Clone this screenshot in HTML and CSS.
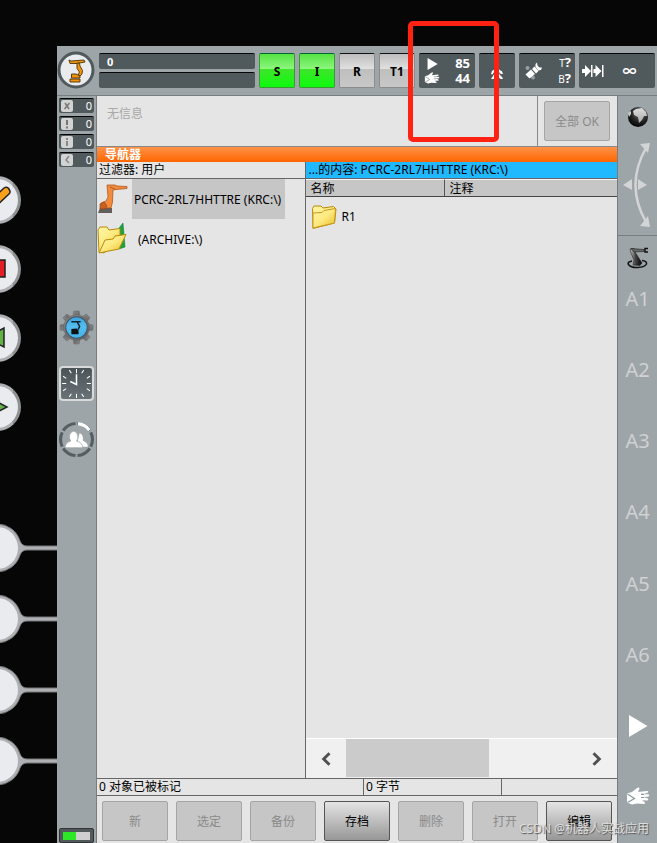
FILE: index.html
```html
<!DOCTYPE html>
<html lang="zh-CN">
<head>
<meta charset="utf-8">
<title>导航器</title>
<link rel="stylesheet" href="styles.css">
</head>
<body>
<svg class="defs" aria-hidden="true">
  <defs>
    <linearGradient id="metal" x1="0" y1="0" x2="1" y2="1"><stop offset="0" stop-color="#8b8b8b"/><stop offset="1" stop-color="#5c5c5c"/></linearGradient>
    <linearGradient id="blue" x1="0" y1="0" x2="0" y2="1"><stop offset="0" stop-color="#37a4dc"/><stop offset=".45" stop-color="#55bdee"/><stop offset="1" stop-color="#42b4ec"/></linearGradient>
    <linearGradient id="folder" x1="0" y1="0" x2="1" y2="1"><stop offset="0" stop-color="#fff6a8"/><stop offset=".5" stop-color="#fde97e"/><stop offset="1" stop-color="#e8b820"/></linearGradient>
    <radialGradient id="globe" cx=".6" cy=".3" r=".75"><stop offset="0" stop-color="#777"/><stop offset=".6" stop-color="#222"/><stop offset="1" stop-color="#000"/></radialGradient>
    <linearGradient id="land" x1="0" y1="0" x2="0" y2="1"><stop offset="0" stop-color="#ddd"/><stop offset="1" stop-color="#aaa"/></linearGradient>
    <linearGradient id="dial" x1="0" y1="0" x2="0" y2="1"><stop offset="0" stop-color="#4a5256"/><stop offset="1" stop-color="#6a7377"/></linearGradient>
    <linearGradient id="arm" x1="0" y1="0" x2="1" y2="0"><stop offset="0" stop-color="#ccc"/><stop offset=".45" stop-color="#444"/><stop offset="1" stop-color="#000"/></linearGradient>
    <symbol id="hand" viewBox="0 0 24 20">
      <path fill="#fff" d="M1 6.500L6 5 11 1Q13-.2 13.500 1.500L12 5 21 4Q23 4.200 22 5.500L17 7.300 22.500 7.200Q24 8.500 22.500 9.500L17 10.500 21.500 11.200Q23 12.500 21.500 13.500L16 13.300 18.500 15Q20 16.500 18 17L11 16.500 6 17.500 1 15.500Z"/>
      <path fill="none" stroke="#899" stroke-width="1.200" d="M1.500 7l7 4.500-7 4M18 7.300h-3M18 10.500h-3"/>
    </symbol>
    <symbol id="play" viewBox="0 0 20 22"><path d="M1 0L19.500 11 1 22Z" fill="#fff"/></symbol>
    <symbol id="folder-icon" viewBox="0 0 26 26">
      <path d="M1.500 4.500L3 2H10L12 4 22.500 2.500 25 5 23.500 19 2 24.500Z" fill="url(#folder)" stroke="#b88a08"/>
      <path d="M2 24V9L11 8.500 13 6.500 24.500 4.500 23.500 19Z" fill="url(#folder)" stroke="#c7981a"/>
    </symbol>
  </defs>
</svg>
<div class="pendant">
  <aside class="hardware">
    <div class="key"><button class="knob" aria-label="编辑键"><svg viewBox="0 0 42 42"><path d="M11 25L28 9Q31 7 33 10T33 15L17 30Z" fill="#f9a11b" stroke="#222" stroke-width="1.500"/></svg></button></div>
    <div class="key"><button class="knob" aria-label="停止"><svg viewBox="0 0 42 42"><path d="M10 12H29V29H10Z" fill="#e31e24" stroke="#222" stroke-width="1.500"/></svg></button></div>
    <div class="key"><button class="knob" aria-label="后退"><svg viewBox="0 0 42 42"><path d="M10 21L28 11V30Z" fill="#62b146" stroke="#222" stroke-width="1.500"/></svg></button></div>
    <div class="key"><button class="knob" aria-label="启动"><svg viewBox="0 0 42 42"><path d="M14 12L31 21 14 30Z" fill="#62b146" stroke="#222" stroke-width="1.500"/></svg></button></div>
    <div class="softkeys">
      <button class="softkey" aria-label="状态键 1"><svg viewBox="0 0 57 50"><path d="M-3 1A24 24 0 0 1 20 18Q22 23 27 23H58V27H27Q22 27 20 32A24 24 0 0 1-3 49Z" fill="#aeb0b3" stroke="#77797b"/><circle cx="-3" cy="25" r="21" fill="#e9ebef"/></svg></button>
      <button class="softkey" aria-label="状态键 2"><svg viewBox="0 0 57 50"><path d="M-3 1A24 24 0 0 1 20 18Q22 23 27 23H58V27H27Q22 27 20 32A24 24 0 0 1-3 49Z" fill="#aeb0b3" stroke="#77797b"/><circle cx="-3" cy="25" r="21" fill="#e9ebef"/></svg></button>
      <button class="softkey" aria-label="状态键 3"><svg viewBox="0 0 57 50"><path d="M-3 1A24 24 0 0 1 20 18Q22 23 27 23H58V27H27Q22 27 20 32A24 24 0 0 1-3 49Z" fill="#aeb0b3" stroke="#77797b"/><circle cx="-3" cy="25" r="21" fill="#e9ebef"/></svg></button>
      <button class="softkey" aria-label="状态键 4"><svg viewBox="0 0 57 50"><path d="M-3 1A24 24 0 0 1 20 18Q22 23 27 23H58V27H27Q22 27 20 32A24 24 0 0 1-3 49Z" fill="#aeb0b3" stroke="#77797b"/><circle cx="-3" cy="25" r="21" fill="#e9ebef"/></svg></button>
    </div>
  </aside>

  <div class="app">
    <header class="topbar">
      <button class="logo" aria-label="主菜单"><svg viewBox="0 0 38 38"><circle cx="19" cy="19" r="17" fill="#e9ebef" stroke="#50595c" stroke-width="3"/><g fill="#f0930d" stroke="#4a3208" stroke-width=".9"><path d="M12 9L14 10 27 9 28 11 20 12.500 13 12.500Z"/><path d="M20 12L22.500 12 23 15 25.500 19.500 25 23 23 25 21 24 22.500 21 20 17.500Z"/><path d="M14.500 23H19L23 25V27H14.500Z"/><path d="M13 28H23V31H13Z"/></g></svg></button>
      <div class="lines"><div class="well line">0</div><div class="well line"></div></div>
      <button class="state on">S</button>
      <button class="state on">I</button>
      <button class="state">R</button>
      <button class="state">T1</button>
      <button class="well speed"><svg class="s-play"><use href="#play"/></svg><span>85</span><svg class="s-hand"><use href="#hand"/></svg><span>44</span></button>
      <button class="well walk" aria-label="程序运行方式"><svg viewBox="0 0 14 18"><circle cx="6.500" cy="5" r="2" fill="#fff"/><path fill="#fff" d="M5 7H8.500L12 9.500 13 12 11 12 9 10 9.500 12.500 12 15 13 17H10.500L7 13.500 4 17H1L4 12.500V10L2.500 12.500 1 12 2 9Z"/></svg></button>
      <button class="well tool"><svg viewBox="0 0 18 18"><circle cx="3.500" cy="6" r="2" fill="#98a0a3"/><circle cx="9" cy="15.500" r="2" fill="#98a0a3"/><path fill="#fff" d="M1.500 12.500L7 7.500 11 12 5.500 16.500ZM8 7L10.500 4.500 14.500 9 12 11.500ZM11.500 5V2L13 .500 13.500 3.500 15.500 5.500 18 5.500 17 8 14.500 8.500Z"/></svg><span class="tb"><span><small>T</small>?</span><span><small>B</small>?</span></span></button>
      <button class="well step"><svg viewBox="0 0 22 14"><path fill="#fff" d="M0 5H3V1L9 7 3 13V9H0ZM9 1H10.500V13H9ZM11.500 5H13.500V1L19.500 7 13.500 13V9H11.500ZM20 1H21.500V13H20Z"/></svg><span>∞</span></button>
    </header>

    <div class="body">
      <nav class="leftbar">
        <button class="well count"><svg viewBox="0 0 12 12"><rect width="12" height="12" rx="2" fill="#d3d3d3"/><path d="M4 3l4 6M8.500 3l-5 6" stroke="#777" stroke-width="1.500"/></svg>0</button>
        <button class="well count"><svg viewBox="0 0 12 12"><rect width="12" height="12" rx="2" fill="#d3d3d3"/><path d="M6 2v5M6 8.500v2" stroke="#777" stroke-width="2"/></svg>0</button>
        <button class="well count"><svg viewBox="0 0 12 12"><rect width="12" height="12" rx="2" fill="#d3d3d3"/><path d="M6 2v2M6 5v5" stroke="#888" stroke-width="2"/></svg>0</button>
        <button class="well count"><svg viewBox="0 0 12 12"><rect width="12" height="12" rx="2" fill="#d3d3d3"/><path d="M8 2L5 6l3 3" fill="none" stroke="#888" stroke-width="1.500"/></svg>0</button>
        <div class="tools">
          <button aria-label="机器人设置"><svg viewBox="0 0 34 34"><g fill="url(#metal)" stroke="#666" stroke-width=".5"><path id="tooth" d="M13.500 7L14.500 1H19.500L20.500 7Z"/><use href="#tooth" transform="rotate(45 17 17)"/><use href="#tooth" transform="rotate(90 17 17)"/><use href="#tooth" transform="rotate(135 17 17)"/><use href="#tooth" transform="rotate(180 17 17)"/><use href="#tooth" transform="rotate(225 17 17)"/><use href="#tooth" transform="rotate(270 17 17)"/><use href="#tooth" transform="rotate(315 17 17)"/><circle cx="17" cy="17" r="12.500"/></g><circle cx="17" cy="17" r="10.500" fill="url(#blue)" stroke="#456"/><path d="M12 11.500H21M18 12L20 16 18.500 19" fill="none" stroke="#123" stroke-width="1.500"/><path d="M12 18.500L17 18 19 20V23.500H12Z" fill="#111"/></svg></button>
          <button aria-label="时钟"><svg viewBox="0 0 34 34"><rect x="1" y="1" width="32" height="32" rx="3" fill="url(#dial)" stroke="#d9d9d9" stroke-width="2"/><path fill="none" stroke="#fff" d="M17 3v4M17 27v4M3 17h4M27 17h4M10 4l2 3M24 4l-2 3M10 30l2-3M24 30l-2-3M4 10l3 2M30 10l-3 2M4 24l3-2M30 24l-3-2"/><path d="M17 8V18L11 15" fill="none" stroke="#fff" stroke-width="1.500"/></svg></button>
          <button aria-label="用户组"><svg viewBox="0 0 34 34"><circle cx="17" cy="17" r="15.500" fill="none" stroke="#555e62" stroke-width="3" pathLength="60" stroke-dasharray="8.800 1.200" stroke-dashoffset="-5.600"/><path d="M18.500 1.600A15.500 15.500 0 0 1 29.500 8" fill="none" stroke="#fff" stroke-width="3"/><path fill="#fff" d="M20 11A4 5 0 0 1 23 18Q28 20 28 24H23L18 19Z"/><path fill="#fff" stroke="#9ea5a9" stroke-width=".7" d="M14 9A4.500 5.500 0 0 1 17 18.500Q23 20 23 25H6Q6 20 11.500 18.500A4.500 5.500 0 0 1 14 9Z"/></svg></button>
        </div>
        <div class="well battery"><i></i></div>
      </nav>

      <main class="center">
        <section class="message"><p>无信息</p><div class="ack"><button class="btn" disabled>全部 OK</button></div></section>
        <h1 class="title">导航器</h1>
        <div class="panes">
          <section class="tree">
            <h2>过滤器: 用户</h2>
            <ul>
              <li><svg viewBox="0 0 32 32"><path d="M3 25H15V30H1Z" fill="#625e5c"/><path fill="#f28b3e" stroke="#a94e13" stroke-width=".7" d="M10 2H18L20 3 30 3.500V5.500L19 6.500 16 7 15.500 19 14 25H5L4 20 9 18 11 14Z"/><path d="M3 21l4-2 3 4-2 3H3zM13 4l5 2" fill="#c76224" stroke="#8d3b0d" stroke-width=".6"/></svg><button class="selected">PCRC-2RL7HHTTRE (KRC:\)</button></li>
              <li><svg viewBox="0 0 32 32"><path d="M15 14L26 0 28 24 22 26Z" fill="#16a53c" stroke="#08752a" stroke-width=".5"/><path d="M1 7L3 4H10L12 7 23 5.500V12L7 30 2 29Z" fill="url(#folder)" stroke="#b88a08"/><path d="M2 30L8 17 16 16 18 13 29 11.500 22 26Z" fill="url(#folder)" stroke="#b88a08"/></svg><button>(ARCHIVE:\)</button></li>
            </ul>
          </section>
          <section class="content">
            <h2>...的内容: PCRC-2RL7HHTTRE (KRC:\)</h2>
            <table>
              <thead><tr><th class="name">名称</th><th>注释</th></tr></thead>
              <tbody><tr><td><span class="file"><svg><use href="#folder-icon"/></svg>R1</span></td><td></td></tr></tbody>
            </table>
            <div class="scroll">
              <button aria-label="向左"><svg viewBox="0 0 10 12"><path d="M8 1L3 6l5 5" fill="none" stroke="#505050" stroke-width="2.500"/></svg></button>
              <div class="track"><div class="thumb"></div></div>
              <button aria-label="向右"><svg viewBox="0 0 10 12"><path d="M2 1l5 5-5 5" fill="none" stroke="#505050" stroke-width="2.500"/></svg></button>
            </div>
          </section>
        </div>
        <div class="status"><span>0 对象已被标记</span><span>0 字节</span><span></span></div>
        <footer class="actions">
          <button class="btn" disabled>新</button>
          <button class="btn" disabled>选定</button>
          <button class="btn" disabled>备份</button>
          <button class="btn">存档</button>
          <button class="btn" disabled>删除</button>
          <button class="btn" disabled>打开</button>
          <button class="btn">编辑</button>
        </footer>
      </main>

      <aside class="rightbar">
        <div class="world">
          <svg class="globe" viewBox="0 0 22 22"><circle cx="11" cy="11" r="10" fill="url(#globe)"/><path fill="url(#land)" d="M6 5L9 3 15 2 19 6 20 10 17 10 15 14 12 17 11 11 7 9ZM1 7L4 5 4 8 2 11Z"/></svg>
          <svg class="swing" viewBox="0 0 30 86"><path d="M23 6Q2 43 23 80" fill="none" stroke="#d3d4d5" stroke-width="2.500"/><path fill="#d3d4d5" d="M17 2L27 1 25 11ZM17 84L27 85 25 74ZM0 43L9 37V48ZM15 37L24 43 15 48Z"/></svg>
        </div>
        <div class="robot"><svg viewBox="0 0 22 22"><path d="M5 14Q0 15 1.500 17.500 4 21 11 20.500 18 20 19.500 17 20 14 15 13.500" fill="none" stroke="#111" stroke-width="1.500"/><path d="M3 2L7 1.500 8 5 15 16 13 18.500 6 18 7 13 4 6Z" fill="url(#arm)" stroke="#222" stroke-width=".6"/><path d="M4 1.500L17 2.500V4.500L7 5Z" fill="#666" stroke="#222" stroke-width=".6"/><path d="M21 1.500h-3v3.500h3" fill="none" stroke="#111" stroke-width="1.500"/></svg></div>
        <div class="axes">
          <span>A1</span><span>A2</span><span>A3</span><span>A4</span><span>A5</span><span>A6</span>
          <button aria-label="启动"><svg class="a-play"><use href="#play"/></svg></button>
          <button aria-label="手动"><svg class="a-hand"><use href="#hand"/></svg></button>
        </div>
      </aside>
    </div>
  </div>
  <div class="marker"></div>
  <div class="watermark">CSDN @机器人实战应用</div>
</div>
</body>
</html>
```
FILE: styles.css
```css
* { box-sizing: border-box; }
body {
  margin: 0;
  background: #060606;
  color: #000;
  font: 12px/16px "Noto Sans", "Noto Sans CJK SC", sans-serif;
}
button { font: inherit; color: inherit; margin: 0; padding: 0; border: 0; background: none; }
svg { display: block; flex: none; }
h1, h2, p, ul { margin: 0; padding: 0; font-size: 12px; font-weight: 400; }
ul { list-style: none; }
.defs { position: absolute; width: 0; height: 0; }

.pendant { position: relative; display: flex; min-height: 100vh; overflow: hidden; }
.hardware { width: 57px; flex: none; padding-top: 165px; overflow: hidden; }
.key { height: 69px; display: flex; align-items: center; }
.knob {
  width: 48px; height: 48px; flex: none; margin-left: -27px;
  border: 3px solid #adafb2; border-right-color: #8f9193; border-radius: 50%;
  background: #e9ebef;
}
.softkeys { padding-top: 71px; }
.softkey { display: flex; align-items: center; width: 57px; height: 71px; }
.softkey svg { width: 57px; height: 50px; }

.app { flex: 1; min-width: 0; margin-top: 46px; display: flex; flex-direction: column; background: #9ea5a9; }
.topbar {
  display: flex; gap: 4px; height: 50px; padding: 7px 2px 7px 0;
  border-bottom: 1px solid #777c7f;
  font-weight: 700;
}
.logo { width: 38px; height: 38px; margin-top: -2px; }
.well { background: #50595c; border-top: 1px solid #050505; border-radius: 2px; color: #fff; }
.lines { flex: 1; display: flex; flex-direction: column; gap: 3px; }
.line { flex: 1; padding-left: 8px; line-height: 15px; font-size: 11px; }
.state {
  width: 36px; padding-top: 2px; border: 1px solid #8c8c8c; border-top-color: #111; border-radius: 2px;
  background: linear-gradient(#bdbdbd, #e0e0e0 44%, #bfbfbf 46%, #c8c8c8);
}
.on { border-color: #3a9a36; border-top-color: #063; background: linear-gradient(#55e342, #8cf57d 44%, #3fe52c 46%, #0dfa0d); }
.speed { display: grid; grid-template-columns: 16px 1fr; align-items: center; justify-items: center; width: 56px; padding: 2px 5px; line-height: 15px; font-size: 13px; }
.speed span { justify-self: end; }
.s-play { width: 11px; height: 12px; }
.s-hand { width: 16px; height: 13px; }
.walk { width: 36px; display: flex; align-items: center; justify-content: center; }
.walk svg { width: 14px; height: 18px; }
.tool { display: flex; align-items: center; justify-content: space-between; width: 56px; padding: 0 4px 0 5px; }
.tool svg { width: 18px; height: 18px; }
.tb { display: flex; flex-direction: column; text-align: right; line-height: 15px; font-size: 13px; }
.tb small { font-size: 10px; font-weight: 400; }
.step { display: flex; align-items: center; width: 76px; padding-left: 3px; }
.step svg { width: 22px; height: 14px; }
.step span { flex: 1; font-size: 14px; }

.body { flex: 1; display: flex; }
.leftbar { width: 40px; flex: none; display: flex; flex-direction: column; gap: 3px; padding: 2px 2px 0; border-right: 1px solid #777c7f; }
.count { display: flex; align-items: center; justify-content: space-between; height: 15px; padding: 0 2px; font-size: 11px; }
.count svg { width: 12px; height: 12px; }
.tools { flex: 1; display: flex; flex-direction: column; gap: 21px; padding-top: 140px; }
.tools svg { width: 35px; height: 35px; }
.battery { height: 15px; padding: 3px; border: 1px solid #333; }
.battery i { display: block; height: 8px; background: linear-gradient(90deg, #2de827 50%, #cfcfcf 50%); }

.center { flex: 1; min-width: 0; display: flex; flex-direction: column; background: #e5e5e5; }
.message { display: flex; height: 51px; border-bottom: 1px solid #888; }
.message p { flex: 1; padding: 10px; color: #a8a8a8; }
.ack { width: 80px; padding: 5px 7px 5px 6px; border-left: 1px solid #888; display: flex; }
.btn {
  flex: 1; height: 40px; padding-top: 2px; border: 1px solid #555; border-radius: 2px;
  background: linear-gradient(#e4e4e4, #979797);
}
.btn:disabled { border-color: #a5a5a5; background: #c6c6c6; color: #8a8a8a; }
.title { padding-left: 8px; line-height: 15px; font-weight: 700; color: #fff; background: linear-gradient(#ff9248, #ff6500); }
.panes { flex: 1; display: flex; }
.panes h2 { height: 17px; padding: 0 2px; border-bottom: 1px solid #666; white-space: nowrap; }
.tree { flex: 2; min-width: 0; }
.tree li { display: flex; align-items: center; height: 40px; }
.tree li svg { width: 32px; height: 32px; }
.tree li button { height: 40px; margin-left: 3px; padding: 2px 4px 0 2px; white-space: nowrap; }
.tree li + li button { margin-left: 7px; }
.selected { background: #c6c6c6; }
.content { flex: 3; min-width: 0; display: flex; flex-direction: column; border-left: 1px solid #666; }
.content h2 { background: #20b8ff; padding-left: 3px; }
table { width: 100%; border-collapse: separate; border-spacing: 0; table-layout: fixed; }
th { height: 18px; padding: 1px 5px 0; font-weight: 400; text-align: left; background: #c6c6c6; border-bottom: 1px solid #444; border-top: 1px solid #f5f5f5; line-height: 15px; }
.name { width: 139px; border-right: 1px solid #555; }
td { padding: 7px 5px; }
.file { display: flex; align-items: center; gap: 5px; }
.file svg { width: 26px; height: 26px; }
.scroll { display: flex; height: 40px; margin-top: auto; background: #f0f0f0; border-top: 1px solid #fff; }
.scroll button { width: 40px; display: flex; align-items: center; justify-content: center; }
.scroll svg { width: 12px; height: 14px; }
.track { flex: 1; }
.thumb { width: 62%; height: 38px; background: #cbcbcb; }
.status { display: grid; grid-template-columns: 266fr 138fr 116fr; height: 18px; border: solid #666; border-width: 1px 0; }
.status span { padding: 0 2px; }
.status span + span { border-left: 1px solid #666; }
.actions { display: flex; gap: 8px; padding: 5px 5px 2px; }

.rightbar { width: 40px; flex: none; display: flex; flex-direction: column; border-left: 1px solid #777c7f; color: #d0d1d2; }
.world { height: 140px; padding-top: 10px; display: flex; flex-direction: column; align-items: center; gap: 14px; border-bottom: 1px solid #777c7f; }
.globe { width: 22px; height: 22px; }
.swing { width: 30px; height: 86px; }
.robot { height: 27px; padding-top: 11px; display: flex; justify-content: center; }
.robot svg { width: 22px; height: 22px; }
.axes { flex: 1; display: flex; flex-direction: column; padding-bottom: 10px; font-size: 20px; }
.axes > * { flex: 1; display: flex; align-items: center; justify-content: center; }
.a-play { width: 20px; height: 22px; }
.a-hand { width: 24px; height: 20px; }

.marker { position: absolute; left: 408px; top: 21px; width: 91px; height: 121px; border: 5px solid #ff2112; border-radius: 5px; }
.watermark { position: absolute; right: 8px; bottom: 6px; color: #dedede; text-shadow: 1px 1px 1px #555; }
```
